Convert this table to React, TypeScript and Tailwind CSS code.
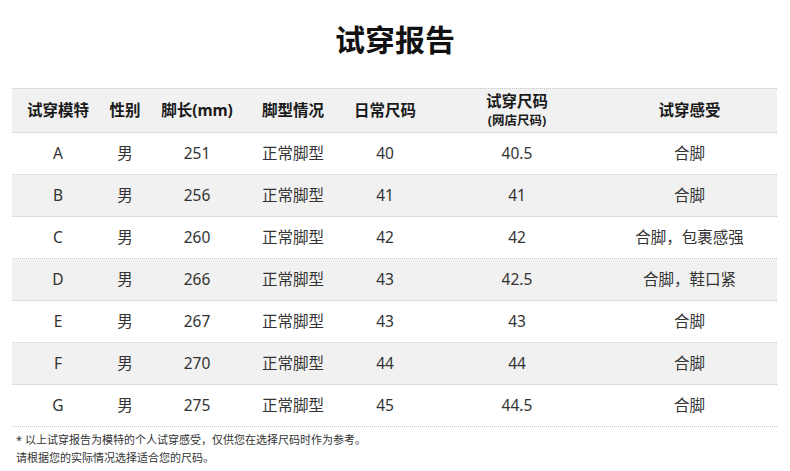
const font = {
  fontFamily: '"Noto Sans", "Noto Sans CJK SC", sans-serif',
};

type Row = {
  model: string;
  gender: string;
  length: string;
  shape: string;
  daily: string;
  tried: string;
  feel: string;
};

const rows: Row[] = [
  { model: "A", gender: "男", length: "251", shape: "正常脚型", daily: "40", tried: "40.5", feel: "合脚" },
  { model: "B", gender: "男", length: "256", shape: "正常脚型", daily: "41", tried: "41", feel: "合脚" },
  { model: "C", gender: "男", length: "260", shape: "正常脚型", daily: "42", tried: "42", feel: "合脚，包裹感强" },
  { model: "D", gender: "男", length: "266", shape: "正常脚型", daily: "43", tried: "42.5", feel: "合脚，鞋口紧" },
  { model: "E", gender: "男", length: "267", shape: "正常脚型", daily: "43", tried: "43", feel: "合脚" },
  { model: "F", gender: "男", length: "270", shape: "正常脚型", daily: "44", tried: "44", feel: "合脚" },
  { model: "G", gender: "男", length: "275", shape: "正常脚型", daily: "45", tried: "44.5", feel: "合脚" },
];

const cols = "grid grid-cols-[92px_42px_102px_90px_94px_170px_175px]";

export default function App() {
  return (
    <div className="w-[790px] h-[471px] bg-white text-[#222] overflow-hidden" style={font}>
      <h1 className="pt-[20px] h-[88px] text-center text-[30px] font-bold leading-[40px] text-[#111]">
        试穿报告
      </h1>

      <div className="ml-[12px] w-[765px]">
        <div
          className={`${cols} h-[45px] items-center bg-[#f1f1f1] border-y border-dotted border-[#c8c8c8] text-[15.5px] font-bold text-[#1a1a1a] text-center`}
        >
          <div>试穿模特</div>
          <div>性别</div>
          <div>脚长(mm)</div>
          <div>脚型情况</div>
          <div>日常尺码</div>
          <div className="flex flex-col items-center leading-[20px]">
            <span>试穿尺码</span>
            <span className="text-[12.5px]">(网店尺码)</span>
          </div>
          <div>试穿感受</div>
        </div>

        {rows.map((r, i) => (
          <div
            key={r.model}
            className={`${cols} h-[42px] items-center border-b border-dotted border-[#c8c8c8] text-[15.5px] text-[#333] text-center ${
              i % 2 === 1 ? "bg-[#f1f1f1]" : "bg-white"
            }`}
          >
            <div>{r.model}</div>
            <div>{r.gender}</div>
            <div>{r.length}</div>
            <div>{r.shape}</div>
            <div>{r.daily}</div>
            <div>{r.tried}</div>
            <div>{r.feel}</div>
          </div>
        ))}
      </div>

      <div className="pl-[16px] pt-[4px] text-[11px] leading-[18px] text-[#333]">
        <p>* 以上试穿报告为模特的个人试穿感受，仅供您在选择尺码时作为参考。</p>
        <p>请根据您的实际情况选择适合您的尺码。</p>
      </div>
    </div>
  );
}
